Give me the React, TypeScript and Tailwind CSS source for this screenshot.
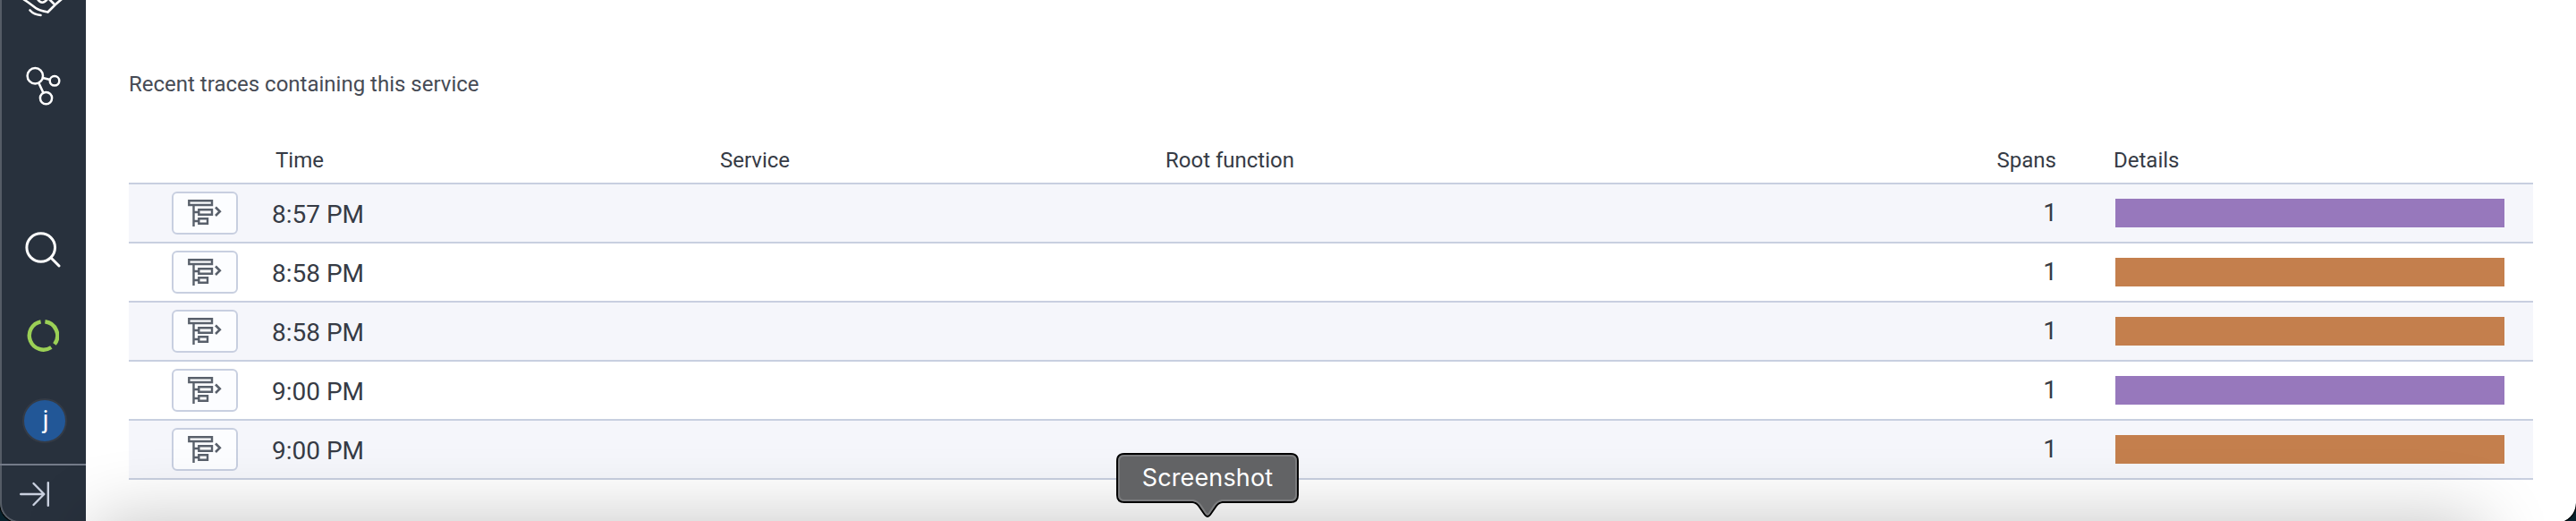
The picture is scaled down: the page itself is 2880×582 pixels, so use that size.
const rows = [
  { time: '8:57 PM', color: 'bg-[#9778bc]' },
  { time: '8:58 PM', color: 'bg-[#c47f4d]' },
  { time: '8:58 PM', color: 'bg-[#c47f4d]' },
  { time: '9:00 PM', color: 'bg-[#9778bc]' },
  { time: '9:00 PM', color: 'bg-[#c47f4d]' },
];

const grid = 'grid grid-cols-[160px_499px_498px_999px_1fr] items-center';

function HandshakeIcon() {
  return (
    <svg className="block h-5 w-12" viewBox="0 0 48 20" fill="none" stroke="#fff" strokeWidth="2.6" strokeLinecap="round">
      <path d="M2 -1 L8 3 L16 9 Q19 11.5 29.5 13.5 L38 5 L45 -1" />
      <path d="M18 -1 Q23 6.5 29 -1 M31 -1 L36 4" />
      <path d="M9.5 11.5 Q14 16.5 21.5 17" />
    </svg>
  );
}

function GraphIcon() {
  return (
    <svg className="block h-[44px] w-[40px]" viewBox="0 0 40 44" fill="none" stroke="#fff" strokeWidth="2.5">
      <circle cx="11.3" cy="10.8" r="8.7" />
      <circle cx="33" cy="16.3" r="5.3" />
      <circle cx="23.5" cy="35.6" r="6.6" />
      <path d="M19.8 13 L28 15 M15.3 18.6 L20.5 29.8" />
    </svg>
  );
}

function SearchIcon() {
  return (
    <svg className="block size-10" viewBox="0 0 40 40" fill="none" stroke="#fff" strokeWidth="3" strokeLinecap="round">
      <circle cx="17.7" cy="17.5" r="15.8" />
      <path d="M29.5 29.5 L38 38" />
    </svg>
  );
}

function RingIcon() {
  return (
    <svg className="block size-9" viewBox="0 0 36 36" fill="none" stroke="#9bd056" strokeWidth="4.4">
      <path d="M15.6 2.3 A15.8 15.8 0 1 0 27.3 31" />
      <path d="M20.4 2.3 A15.8 15.8 0 0 1 31 27.5" />
    </svg>
  );
}

function TraceIcon() {
  return (
    <svg className="block h-[30px] w-[38px]" viewBox="0 0 38 30" fill="none" stroke="#59606b" strokeWidth="2.4">
      <path d="M1.3 1.2 H27 V6 H1.3 Z M6.5 7 V30 M7 14 H12 M7 24 H12" />
      <path d="M12.3 11.3 H27 V16.7 H12.3 Z M12.3 21.3 H22 V26.7 H12.3 Z" />
      <path d="M31 8.5 L35.8 13.3 L31 18" strokeWidth="2.6" />
    </svg>
  );
}

export default function App() {
  return (
    <div className="relative flex h-[582px] w-[2880px] overflow-hidden bg-white font-[Roboto,sans-serif] text-[#363b45]">
      <aside className="flex h-[584px] w-24 shrink-0 flex-col rounded-bl-[22px] border-b-2 border-l-2 border-[#555c66] bg-[#28313d]">
        <div className="pl-[22px]"><HandshakeIcon /></div>
        <div className="pt-[54px] pl-[26px]"><GraphIcon /></div>
        <div className="pt-[141px] pl-[26px]"><SearchIcon /></div>
        <div className="pt-[58px] pl-7"><RingIcon /></div>
        <div className="mt-[52px] ml-[23px] flex size-[50px] items-center justify-center rounded-full border-2 border-[#343b46] bg-[#225797] pb-0.5 pl-0.5 text-[28px] leading-none text-white">
          j
        </div>
        <div className="-ml-0.5 mt-[23px] flex h-16 items-start border-t-2 border-[#747b89] pt-[18px] pl-[22px]">
          <svg className="block h-7 w-[34px]" viewBox="0 0 34 28" fill="none" stroke="#c9d0df" strokeWidth="2.4" strokeLinecap="round" strokeLinejoin="round">
            <path d="M1.2 14 H27 M15.5 2 L27.3 14 L15.5 26 M31.8 1.2 V26.8" />
          </svg>
        </div>
      </aside>
      <main className="flex h-full w-[2736px] flex-col pl-12">
        <h2 className="mt-[78px] h-8 text-[24px] leading-8 text-[#464b55]">Recent traces containing this service</h2>
        <section className="mt-[53px]">
          <div className={grid + ' h-[43px] border-b-2 border-[#c8cfe0] pb-[9px] text-[24px] leading-8'}>
            <span />
            <span className="pl-1">Time</span>
            <span className="pl-0.5">Service</span>
            <span className="flex justify-between pl-0.5 pr-px"><span>Root function</span><span>Spans</span></span>
            <span className="pl-[63px]">Details</span>
          </div>
          {rows.map((row, i) => (
            <div key={i} className={grid + ' h-[66px] border-b-2 border-[#c8cfe0] text-[28px] odd:bg-white even:bg-[#f5f6fb]'}>
              <button className="ml-12 flex h-12 w-[74px] items-center rounded-md border-2 border-[#c8cfe0] bg-[#fcfdff] pl-4">
                <TraceIcon />
              </button>
              <span className="pt-[3px]">{row.time}</span>
              <span />
              <span className="text-right">1</span>
              <div className={'ml-[65px] mr-8 h-8 ' + row.color} />
            </div>
          ))}
        </section>
      </main>
      <div className="pointer-events-none absolute left-[104px] top-[582px] h-[120px] w-[2670px] shadow-[0_0_80px_rgba(0,0,0,0.24)]" />
      <div className="pointer-events-none absolute inset-x-0 -bottom-0.5 -top-12 rounded-b-[22px] shadow-[0_0_0_1px_#000,0_0_0_40px_#08222d]" />
      <div className="absolute left-[1248px] top-[506px] h-[72px] w-[204px] font-[Inter,sans-serif]">
        <svg className="absolute inset-0" width="204" height="72" viewBox="0 0 204 72">
          <path d="M9 1 H195 Q203 1 203 9 V47 Q203 55 195 55 H119 Q115 55 112 59 L105 69 Q102 73 99 69 L92 59 Q89 55 85 55 H9 Q1 55 1 47 V9 Q1 1 9 1 Z" fill="#626365" stroke="#000" strokeWidth="2" />
          <path d="M9 3 H195 Q201 3 201 9 V47 Q201 53 195 53 H118 Q113 54 110 58 L104 67 Q102 70 100 67 L94 58 Q91 54 86 53 H9 Q3 53 3 47 V9 Q3 3 9 3 Z" fill="none" stroke="#7b7c7e" strokeWidth="2" />
        </svg>
        <div className="relative flex h-14 items-center justify-center text-[27px] tracking-[0.15px] text-white">Screenshot</div>
      </div>
    </div>
  );
}
